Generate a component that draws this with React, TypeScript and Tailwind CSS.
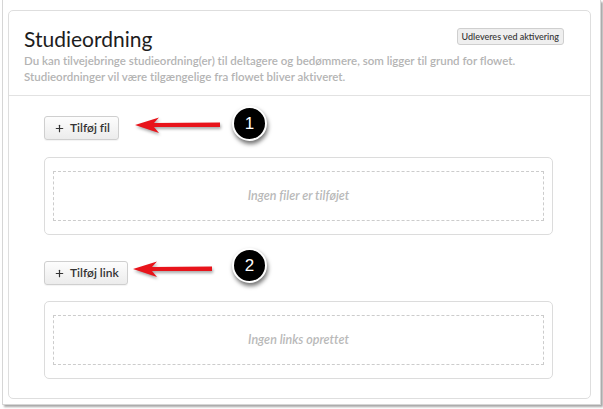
import { Plus } from 'lucide-react'

const font = { fontFamily: 'Lato, "Open Sans", sans-serif' }

const AddButton = ({ label }: { label: string }) => (
  <button className="flex h-[24px] items-center gap-[5px] self-start rounded-[3px] border border-[#cfcfcf] bg-gradient-to-b from-[#fdfdfd] to-[#ececec] pl-[9px] pr-[8px] text-[12px] font-semibold text-[#333] shadow-[0_1px_1px_rgba(0,0,0,0.05)] [font-variant-ligatures:none]">
    <Plus className="h-[11px] w-[11px]" strokeWidth={2.6} />
    {label}
  </button>
)

const EmptyBox = ({ text }: { text: string }) => (
  <div className="w-[509px] rounded-[5px] border border-[#dcdcdc] px-[8px] py-[13px]">
    <div className="flex h-[50px] items-center justify-center border border-dashed border-[#cccccc] text-[12.5px] font-semibold italic text-[#b9b9b9] [font-variant-ligatures:none]">
      {text}
    </div>
  </div>
)

const Arrow = ({ left, top, width }: { left: number; top: number; width: number }) => (
  <svg
    className="absolute"
    style={{ left, top, filter: 'drop-shadow(1px 2px 1.5px rgba(0,0,0,0.35))' }}
    width={width + 4}
    height={18}
    viewBox={`0 0 ${width + 4} 18`}
  >
    <polygon points={`0,8 ${24},0.5 ${19},6 ${width},5.5 ${width},10 ${19},10 ${24},16`} fill="#e8141b" />
  </svg>
)

const Marker = ({ left, top, n }: { left: number; top: number; n: number }) => (
  <div
    className="absolute flex h-[35px] w-[35px] items-center justify-center rounded-full border-[2.5px] border-white bg-black text-[17px] text-white shadow-[1px_3px_4px_rgba(0,0,0,0.55)]"
    style={{ left, top, fontFamily: '"Liberation Sans", Arial, sans-serif' }}
  >
    {n}
  </div>
)

export default function App() {
  return (
    <div className="relative h-[409px] w-[603px] overflow-hidden bg-white" style={font}>
      <div className="ml-[2px] h-[405px] w-[599px] border-x border-b border-[#d6d6d6] bg-white pl-[5px] pt-[10px] shadow-[2px_2px_2px_rgba(0,0,0,0.35)]">
        <div className="w-[583px] rounded-[5px] border border-[#dedede]">
          <div className="h-[85px] border-b border-[#e2e2e2] pl-[15px] pr-[26px] pt-[15px]">
            <div className="flex items-start justify-between">
              <h1 className="text-[21px] leading-[26px] text-[#1d1d1d]">Studieordning</h1>
              <span className="mt-[2px] whitespace-nowrap rounded-[3px] border border-[#cfcfcf] bg-[#efefef] px-[4px] py-[1px] text-[9px] font-medium leading-[13px] text-[#333]">
                Udleveres ved aktivering
              </span>
            </div>
            <p className="mt-[1px] whitespace-nowrap text-[11.5px] font-semibold leading-[16px] text-[#b4b4b4] [font-variant-ligatures:none]">
              Du kan tilvejebringe studieordning(er) til deltagere og bedømmere, som ligger til grund for flowet.
              <br />
              Studieordninger vil være tilgængelige fra flowet bliver aktiveret.
            </p>
          </div>
          <div className="flex flex-col pb-[19px] pl-[35px] pt-[20px]">
            <AddButton label="Tilføj fil" />
            <div className="mt-[17px]">
              <EmptyBox text="Ingen filer er tilføjet" />
            </div>
            <div className="mt-[26px]">
              <AddButton label="Tilføj link" />
            </div>
            <div className="mt-[16px]">
              <EmptyBox text="Ingen links oprettet" />
            </div>
          </div>
        </div>
      </div>
      <Arrow left={135} top={117} width={85} />
      <Marker left={232} top={106} n={1} />
      <Arrow left={133} top={261} width={79} />
      <Marker left={232} top={248} n={2} />
    </div>
  )
}
